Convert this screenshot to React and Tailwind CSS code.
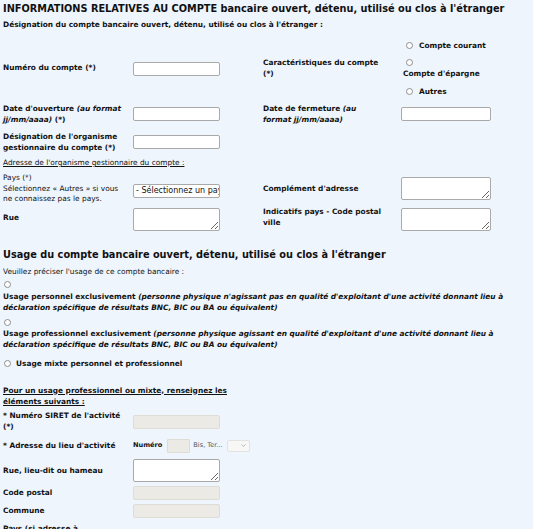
import React from "react";

const Input = ({ className = "", disabled }) => (
  <input
    type="text"
    disabled={disabled}
    className={`block h-[14px] rounded-[2px] border ${disabled ? "border-[#dedcd4] bg-[#ebeae4]" : "border-[#a9a9a9] bg-white"} ${className}`}
  />
);

const Area = ({ className = "" }) => (
  <textarea className={`block h-[23px] resize rounded-[2px] border border-[#a9a9a9] bg-white ${className}`} />
);

const Radio = ({ className = "" }) => (
  <span className={`inline-block h-[7px] w-[7px] shrink-0 rounded-full border border-[#8f8f8f] bg-white ${className}`} />
);

const App = () => {
  return (
    <div
      className="h-[529px] overflow-hidden bg-[#eef5fd] px-[3px] pt-[3px] text-[7.4px] leading-[11px] text-[#111]"
      style={{ fontFamily: '"DejaVu Sans", Verdana, sans-serif' }}
    >
      <h1 className="text-[9.75px] font-bold leading-[12px]">
        INFORMATIONS RELATIVES AU COMPTE bancaire ouvert, détenu, utilisé ou clos à l'étranger
      </h1>
      <p className="mt-[4px] font-bold">Désignation du compte bancaire ouvert, détenu, utilisé ou clos à l'étranger :</p>

      {/* Compte */}
      <div className="mt-[10px] grid grid-cols-[130px_130px_138px_90px] gap-y-[6px] font-bold">
        <div className="flex items-center">
          <div className="-translate-y-[1px]">Numéro du compte (*)</div>
        </div>
        <div className="flex items-center">
          <Input className="w-[87px]" />
        </div>
        <div className="flex items-center pr-[10px]">
          <div className="-translate-y-[1px]">Caractéristiques du compte (*)</div>
        </div>
        <div className="flex flex-col">
          <div className="flex h-[11px] items-center">
            <Radio className="ml-[5px] mr-[6px]" /> Compte courant
          </div>
          <div className="mt-[6px] flex h-[11px] items-center">
            <Radio className="ml-[5px]" />
          </div>
          <div className="pl-[2px]">Compte d'épargne</div>
          <div className="mt-[7px] flex h-[11px] items-center">
            <Radio className="ml-[5px] mr-[6px]" /> Autres
          </div>
        </div>

        <div className="flex items-center pr-[4px]">
          <div>
            Date d'ouverture <i>(au format jj/mm/aaaa)</i> (*)
          </div>
        </div>
        <div className="flex items-center">
          <Input className="w-[87px]" />
        </div>
        <div className="flex items-center pr-[22px]">
          <div>
            Date de fermeture <i>(au format jj/mm/aaaa)</i>
          </div>
        </div>
        <div className="flex items-center">
          <Input className="w-[90px]" />
        </div>

        <div className="flex items-center pr-[6px]">Désignation de l'organisme gestionnaire du compte (*)</div>
        <div className="flex items-center">
          <Input className="w-[87px]" />
        </div>
        <div />
        <div />
      </div>

      <p className="mt-[4px] underline">Adresse de l'organisme gestionnaire du compte :</p>

      <div className="mt-[5px] grid grid-cols-[130px_130px_138px_90px] gap-y-[3px]">
        <div className="pr-[10px] leading-[10.5px]">
          Pays (*)
          <br />
          Sélectionnez « Autres » si vous ne connaissez pas le pays.
        </div>
        <div className="flex items-center">
          <div className="mt-[4px] flex h-[14px] w-[87px] items-center overflow-hidden whitespace-nowrap rounded-[2px] border border-[#a9a9a9] bg-white pl-[2px] text-[8px]">
            - Sélectionnez un pays -
          </div>
        </div>
        <div className="flex items-center font-bold">Complément d'adresse</div>
        <div className="flex items-center">
          <Area className="w-[90px]" />
        </div>

        <div className="flex items-center font-bold">
          <div className="-translate-y-[2px]">Rue</div>
        </div>
        <div className="flex items-center">
          <Area className="w-[87px]" />
        </div>
        <div className="flex items-center pr-[4px] font-bold">
          <div className="-translate-y-[2px]">Indicatifs pays - Code postal ville</div>
        </div>
        <div className="flex items-center">
          <Area className="w-[90px]" />
        </div>
      </div>

      <h2 className="mt-[18px] text-[9.75px] font-bold leading-[12px]">
        Usage du compte bancaire ouvert, détenu, utilisé ou clos à l'étranger
      </h2>
      <p className="mt-[5px]">Veuillez préciser l'usage de ce compte bancaire :</p>

      <div className="mt-[3px] font-bold">
        <div className="flex h-[10px] items-center">
          <Radio className="ml-[1px]" />
        </div>
        <div className="mt-[1px]">
          Usage personnel exclusivement{" "}
          <i>
            (personne physique n'agissant pas en qualité d'exploitant d'une activité donnant lieu à déclaration
            spécifique de résultats BNC, BIC ou BA ou équivalent)
          </i>
        </div>
      </div>
      <div className="mt-[5px] font-bold">
        <div className="flex h-[10px] items-center">
          <Radio className="ml-[1px]" />
        </div>
        <div>
          Usage professionnel exclusivement{" "}
          <i>
            (personne physique agissant en qualité d'exploitant d'une activité donnant lieu à déclaration spécifique
            de résultats BNC, BIC ou BA ou équivalent)
          </i>
        </div>
      </div>
      <div className="mt-[9px] flex h-[10px] items-center font-bold">
        <Radio className="ml-[1px] mr-[5px]" /> Usage mixte personnel et professionnel
      </div>

      <p className="mt-[16px] w-[240px] font-bold underline">
        Pour un usage professionnel ou mixte, renseignez les éléments suivants :
      </p>

      <div className="font-bold">
        <div className="mt-[3px] flex items-center">
          <div className="w-[130px] pr-[4px]">* Numéro SIRET de l'activité (*)</div>
          <Input disabled className="mt-[3px] w-[87px]" />
        </div>

        <div className="mt-[7px] flex h-[14px] items-center">
          <div className="w-[130px]">* Adresse du lieu d'activité</div>
          <span className="text-[6.6px]">Numéro</span>
          <span className="ml-[5px] block h-[14px] w-[23px] rounded-[1px] border border-[#dedcd4] bg-[#ebeae4]" />
          <span className="ml-[3px] text-[6.6px] font-normal text-[#555]">Bis, Ter...</span>
          <span className="ml-[4px] flex h-[12px] w-[23px] items-center justify-end rounded-[2px] border border-[#e2e2e2] bg-[#f7f7f5] pr-[3px]">
            <svg width="5" height="3" viewBox="0 0 5 3" fill="none" stroke="#9a9a9a" strokeWidth="0.7">
              <path d="M0.5 0.5 L2.5 2.5 L4.5 0.5" />
            </svg>
          </span>
        </div>

        <div className="mt-[6px] flex items-center">
          <div className="w-[130px]">Rue, lieu-dit ou hameau</div>
          <Area className="w-[87px]" />
        </div>

        <div className="mt-[4px] flex items-center">
          <div className="w-[130px]">Code postal</div>
          <Input disabled className="w-[87px]" />
        </div>

        <div className="mt-[4px] flex items-center">
          <div className="w-[130px]">Commune</div>
          <Input disabled className="w-[87px]" />
        </div>

        <div className="mt-[5px]">Pays (si adresse à</div>
      </div>
    </div>
  );
};

export default App;
